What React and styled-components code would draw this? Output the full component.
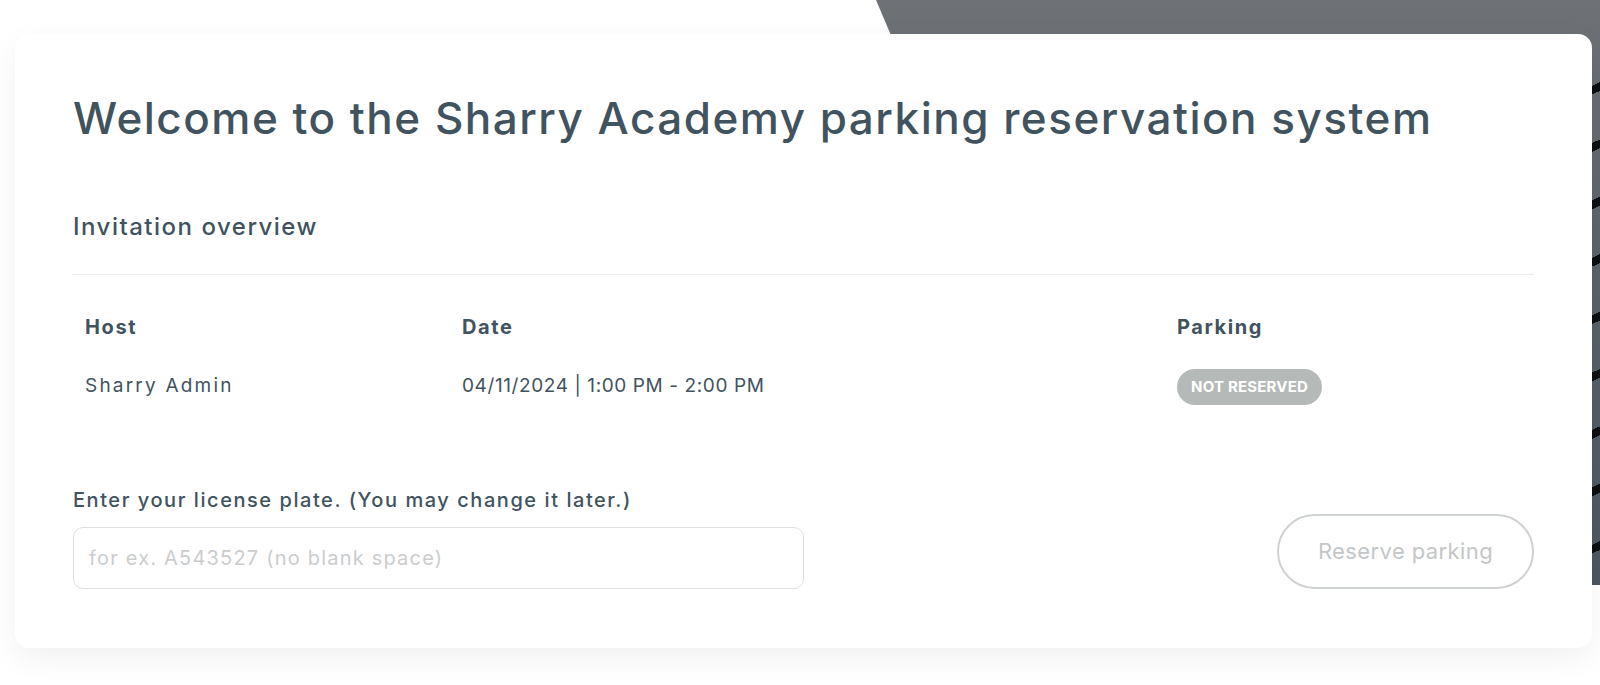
import React from "react";
import styled, { createGlobalStyle } from "styled-components";

const GlobalStyle = createGlobalStyle`
  html, body {
    margin: 0;
    padding: 0;
    background: #ffffff;
  }
  body {
    font-family: "Inter", "Noto Sans", sans-serif;
    color: #40535f;
  }
  * {
    box-sizing: border-box;
  }
`;

const Page = styled.div`
  position: relative;
  min-height: 685px;
  padding: 34px 8px 38px 15px;
  overflow: hidden;
`;

// decorative photo band behind the card (top right)
const Backdrop = styled.div`
  position: absolute;
  top: 0;
  right: 0;
  width: 724px;
  height: 585px;
  background: linear-gradient(180deg, #6e7277 0%, #5d646b 40%, #4a5661 100%);
  clip-path: polygon(0 0, 100% 0, 100% 100%, 248px 100%);
`;

const Stripes = styled.div`
  position: absolute;
  top: 40px;
  right: 0;
  width: 14px;
  height: 545px;
  background: repeating-linear-gradient(
    155deg,
    transparent 0 44px,
    #0d0f12 44px 52px
  );
`;

const Card = styled.main`
  position: relative;
  background: #ffffff;
  border-radius: 14px;
  box-shadow: 0 10px 30px rgba(0, 0, 0, 0.06);
  padding: 57px 58px 59px 58px;
`;

const Title = styled.h1`
  margin: 0;
  font-size: 44px;
  line-height: 54px;
  font-weight: 500;
  letter-spacing: 1.5px;
  color: #40535f;
`;

const SectionTitle = styled.h2`
  margin: 67px 0 0;
  font-size: 24px;
  line-height: 30px;
  font-weight: 500;
  letter-spacing: 1.5px;
  color: #40535f;
`;

const Divider = styled.hr`
  margin: 32px 0 0;
  border: 0;
  border-top: 1px solid #ebedee;
`;

const Table = styled.div`
  display: grid;
  grid-template-columns: 377px 715px 1fr;
  row-gap: 29px;
  padding: 40px 0 0 12px;
  align-items: center;
`;

const HeadCell = styled.div`
  font-size: 20px;
  line-height: 24px;
  font-weight: 700;
  letter-spacing: 1.6px;
  color: #40535f;
`;

const Cell = styled.div`
  font-size: 19px;
  line-height: 36px;
  font-weight: 400;
  letter-spacing: ${(p) => p.$spacing || "1px"};
  color: #40535f;
`;

const Pill = styled.span`
  display: inline-flex;
  align-items: center;
  height: 36px;
  padding: 0 14px;
  border-radius: 18px;
  background: #b5bab9;
  color: #ffffff;
  font-size: 15px;
  font-weight: 700;
  letter-spacing: 0.2px;
  text-transform: uppercase;
  vertical-align: middle;
`;

const FormRow = styled.div`
  display: flex;
  justify-content: space-between;
  align-items: flex-end;
  margin-top: 82px;
`;

const Field = styled.label`
  display: flex;
  flex-direction: column;
  gap: 14px;
  width: 731px;
`;

const FieldLabel = styled.span`
  font-size: 20px;
  line-height: 26px;
  font-weight: 500;
  letter-spacing: 1.55px;
  color: #40535f;
`;

const Input = styled.input`
  height: 62px;
  border: 1px solid #dedfe0;
  border-radius: 10px;
  padding: 0 15px;
  font-family: inherit;
  font-size: 20px;
  letter-spacing: 1.2px;
  color: #40535f;
  outline: none;
  &::placeholder {
    color: #cbcdce;
  }
`;

const Button = styled.button`
  width: 257px;
  height: 75px;
  border: 2px solid #cfd2d2;
  border-radius: 38px;
  background: #ffffff;
  color: #c3c7c7;
  font-family: inherit;
  font-size: 22px;
  font-weight: 400;
  letter-spacing: 0.4px;
  cursor: not-allowed;
`;

export default function App() {
  return (
    <>
      <GlobalStyle />
      <Page>
        <Backdrop>
          <Stripes />
        </Backdrop>
        <Card>
          <Title>Welcome to the Sharry Academy parking reservation system</Title>
          <SectionTitle>Invitation overview</SectionTitle>
          <Divider />
          <Table>
            <HeadCell>Host</HeadCell>
            <HeadCell>Date</HeadCell>
            <HeadCell>Parking</HeadCell>
            <Cell $spacing="2.2px">Sharry Admin</Cell>
            <Cell $spacing="0.6px">04/11/2024 | 1:00 PM - 2:00 PM</Cell>
            <Cell>
              <Pill>Not reserved</Pill>
            </Cell>
          </Table>
          <FormRow>
            <Field>
              <FieldLabel>Enter your license plate. (You may change it later.)</FieldLabel>
              <Input placeholder="for ex. A543527 (no blank space)" />
            </Field>
            <Button disabled>Reserve parking</Button>
          </FormRow>
        </Card>
      </Page>
    </>
  );
}
